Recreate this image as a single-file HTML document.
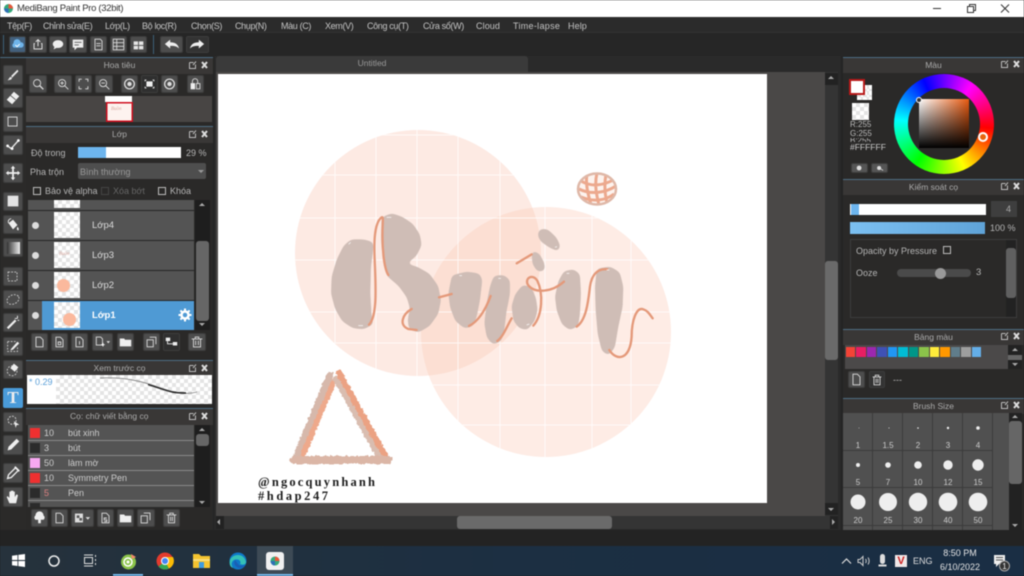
<!DOCTYPE html>
<html><head><meta charset="utf-8"><style>
*{box-sizing:border-box}
html,body{margin:0;padding:0;background:#222}
#r{position:relative;width:1024px;height:576px;overflow:hidden;background:#242424;font-family:"Liberation Sans","Noto Sans CJK SC",sans-serif;font-size:9px;color:#b5b5b5;filter:blur(.4px)}
#r div,#r span.a,#r svg.a{position:absolute}
.t{white-space:nowrap;line-height:12px}
.m{color:#c4c4c4;top:20px;letter-spacing:-.35px}
.b{background:#4d4d4d;border-radius:2px;border:1px solid #3c3c3c}
.b svg{position:absolute;left:0;top:0;width:100%;height:100%}
.h{background:#393736;border-top:1px solid #4d6d84;text-align:center;line-height:15px;font-size:8.5px;color:#aaa}
.p{background:#2a2928}
.row{background:#545454;border-bottom:1px solid #262626}
.ck{background-color:#fff;background-image:linear-gradient(45deg,#e4e4e4 25%,transparent 25%,transparent 75%,#e4e4e4 75%),linear-gradient(45deg,#e4e4e4 25%,transparent 25%,transparent 75%,#e4e4e4 75%);background-size:8px 8px;background-position:0 0,4px 4px}
.cb{width:8px;height:8px;border:1px solid #bbb}
.sw{width:10px;height:10px}
.pl{width:9.5px;height:9.5px;top:347px}
.s{background:#2b2a29}
.dot{background:#eee;border-radius:50%}
.n{width:30px;text-align:center;color:#ccc;font-size:8px;line-height:10px}
svg{display:block}
</style></head><body><div id="r">

<!-- title bar -->
<div style="left:0;top:0;width:1024px;height:17px;background:#fff"></div>
<svg class="a" style="left:3px;top:3px" width="11" height="11" viewBox="0 0 11 11"><circle cx="5.500" cy="5.500" r="4.500" fill="#38a87a"/><path d="M5.500 1a4.500 4.500 0 0 1 4.500 4.500H5.500z" fill="#e8563a"/><path d="M1 5.500a4.500 4.500 0 0 0 4.500 4.500V5.500z" fill="#2f6fb5"/></svg>
<div class="t" style="left:17px;top:3px;color:#333;font-size:9.500px;letter-spacing:-.3px">MediBang Paint Pro (32bit)</div>
<svg class="a" style="left:930px;top:2px" width="90" height="13" viewBox="0 0 90 13" fill="none" stroke="#333"><path d="M3 6.500H11"/><path d="M37.500 4.500h6v6h-6zM39.500 4.500v-2h6v6h-2"/><path d="M71 2.500l8 8M79 2.500l-8 8"/></svg>

<!-- menu -->
<div style="left:0;top:17px;width:1024px;height:16px;background:#2b2b2b;border-bottom:1px solid #333"></div>
<div class="t m" style="left:7px">Tệp(F)</div>
<div class="t m" style="left:43px">Chỉnh sửa(E)</div>
<div class="t m" style="left:105px">Lớp(L)</div>
<div class="t m" style="left:142px">Bộ lọc(R)</div>
<div class="t m" style="left:191px">Chọn(S)</div>
<div class="t m" style="left:235px">Chụp(N)</div>
<div class="t m" style="left:281px">Màu (C)</div>
<div class="t m" style="left:325px">Xem(V)</div>
<div class="t m" style="left:367px">Công cụ(T)</div>
<div class="t m" style="left:423px">Cửa sổ(W)</div>
<div class="t m" style="left:476px;letter-spacing:.1px">Cloud</div>
<div class="t m" style="left:513px;letter-spacing:.3px">Time-lapse</div>
<div class="t m" style="left:568px;letter-spacing:.1px">Help</div>

<!-- toolbar -->
<div style="left:0;top:33px;width:1024px;height:23px;background:#262626"></div>
<div style="left:3px;top:35px;width:1px;height:19px;background:#3d6078"></div>
<div style="left:153px;top:35px;width:1px;height:19px;background:#3d6078"></div>
<div class="b" style="left:9px;top:36px;width:17px;height:17px;background:#43607c"><svg viewBox="0 0 17 17"><path d="M4 12a3 3 0 0 1 0-5 4 4 0 0 1 8-1 3 3 0 0 1 1 6z" fill="#6fb4ea"/><path d="M6 9l2 2 3-3" stroke="#fff" fill="none"/></svg></div>
<div class="b" style="left:29px;top:36px;width:18px;height:17px"><svg viewBox="0 0 18 17" fill="none" stroke="#eee"><path d="M5.500 7.500h-1v6h9v-6h-1M9 10.500V3M6.500 5.500L9 3l2.500 2.500"/></svg></div>
<div class="b" style="left:49px;top:36px;width:18px;height:17px"><svg viewBox="0 0 18 17"><ellipse cx="9" cy="8" rx="6" ry="4.500" fill="#eee"/><path d="M5 11l-1 3 4-2z" fill="#eee"/></svg></div>
<div class="b" style="left:69px;top:36px;width:18px;height:17px"><svg viewBox="0 0 18 17"><path d="M3 3h12v9H8l-3 3v-3H3z" fill="#eee"/><path d="M5 6h8M5 9h5" stroke="#555"/></svg></div>
<div class="b" style="left:90px;top:36px;width:17px;height:17px"><svg viewBox="0 0 17 17" fill="none" stroke="#ddd"><path d="M4.500 2.500h6l2 2v10h-8zM6 7.500h5M6 10h5"/></svg></div>
<div class="b" style="left:110px;top:36px;width:17px;height:17px"><svg viewBox="0 0 17 17" fill="none" stroke="#ddd"><path d="M2.500 2.500h12v12h-12zM2.500 6.500h12M2.500 10.500h12M6.500 2.500v12"/></svg></div>
<div class="b" style="left:130px;top:36px;width:17px;height:17px"><svg viewBox="0 0 17 17" fill="#e5e5e5"><path d="M3 5h5v4H3zM9 5h5v4H9zM3 10h5v4H3zM9 10h5v4H9z"/></svg></div>
<div class="b" style="left:160px;top:36px;width:23px;height:17px"><svg viewBox="0 0 23 17"><path d="M4 8l6-5v3c5 0 9 2 10 7-3-3-6-3-10-3v3z" fill="#eee"/></svg></div>
<div class="b" style="left:186px;top:36px;width:23px;height:17px;background:#333"><svg viewBox="0 0 23 17"><path d="M19 8l-6-5v3C8 6 4 8 3 13c3-3 6-3 10-3v3z" fill="#eee"/></svg></div>

<!-- left tool column -->
<div class="s" style="left:0;top:57px;width:26px;height:473px;border-top:1px solid #4d6d84"></div>
<div class="b" style="left:3px;top:65px;width:20px;height:20px"><svg viewBox="0 0 20 20"><path d="M15 4L8 11l1 2 7-7zM7 12l-3 4 4-1 1-2z" fill="#e8e8e8"/></svg></div>
<div class="b" style="left:3px;top:88px;width:20px;height:20px"><svg viewBox="0 0 20 20"><path d="M11 3l6 5-8 9-6-5z" fill="#eee"/><path d="M7 7l6 5" stroke="#555"/></svg></div>
<div class="b" style="left:3px;top:112px;width:20px;height:20px"><svg viewBox="0 0 20 20" fill="none" stroke="#ddd"><path d="M4.500 4.500h10v10h-10z"/></svg></div>
<div class="b" style="left:3px;top:135px;width:20px;height:20px"><svg viewBox="0 0 20 20"><path d="M4 11l4 3 8-9" stroke="#e8e8e8" stroke-width="1.500" fill="none"/><circle cx="4" cy="11" r="1.500" fill="#fff"/><circle cx="9" cy="14" r="1.500" fill="#fff"/><circle cx="16" cy="5" r="1.500" fill="#fff"/></svg></div>
<div class="b" style="left:3px;top:163px;width:20px;height:20px"><svg viewBox="0 0 20 20" fill="#eee"><path d="M9 5h2v4h4v2h-4v4H9v-4H5V9h4z"/><path d="M10 2l2.500 3h-5zM10 18l2.500-3h-5zM2 10l3-2.500v5zM18 10l-3-2.500v5z"/></svg></div>
<div class="b" style="left:3px;top:192px;width:20px;height:19px"><svg viewBox="0 0 20 19"><path d="M4 3h12v12H4z" fill="#e4e4e4"/></svg></div>
<div class="b" style="left:3px;top:215px;width:20px;height:19px"><svg viewBox="0 0 20 19"><path d="M5 8l5-4 5 6-5 5z" fill="#eee"/><path d="M5 8C4 5 6 3 8 3" stroke="#eee" fill="none"/><path d="M15 12c1 1 2 3 1 4-2 0-2-2-1-4z" fill="#eee"/></svg></div>
<div class="b" style="left:3px;top:238px;width:20px;height:19px"><div style="left:3px;top:3px;width:13px;height:12px;background:linear-gradient(90deg,#333,#eee)"></div></div>
<div class="b" style="left:3px;top:267px;width:20px;height:19px"><svg viewBox="0 0 20 19" fill="none" stroke="#ccc" stroke-dasharray="2 1.500"><path d="M4.500 4.500h10v10h-10z"/></svg></div>
<div class="b" style="left:3px;top:290px;width:20px;height:19px"><svg viewBox="0 0 20 19" fill="none" stroke="#ccc" stroke-dasharray="2 1.500"><ellipse cx="10" cy="9.500" rx="7" ry="5" transform="rotate(-25 10 9.500)"/></svg></div>
<div class="b" style="left:3px;top:313px;width:20px;height:19px"><svg viewBox="0 0 20 19"><path d="M4 16L13 7" stroke="#eee" stroke-width="2.500"/><path d="M15 2v3M12 5h3M17 7h-2" stroke="#eee"/></svg></div>
<div class="b" style="left:3px;top:337px;width:20px;height:19px"><svg viewBox="0 0 20 19"><path d="M4 4h9M4 4v11h11V9" stroke="#ccc" stroke-dasharray="2 1.500" fill="none"/><path d="M8 12l7-8 2 2-7 7-3 1z" fill="#eee"/></svg></div>
<div class="b" style="left:3px;top:360px;width:20px;height:19px"><svg viewBox="0 0 20 19"><circle cx="9" cy="11" r="5.500" fill="none" stroke="#ccc" stroke-dasharray="2 1.500"/><path d="M11 3l5 4-4 5-5-4z" fill="#eee"/></svg></div>
<div class="b" style="left:3px;top:388px;width:20px;height:20px;background:#4a9bd9;border-color:#4a9bd9"><div class="t" style="left:0;top:1px;width:18px;text-align:center;font:bold 17px/16px 'Liberation Serif',serif;color:#eee">T</div></div>
<div class="b" style="left:3px;top:412px;width:20px;height:20px"><svg viewBox="0 0 20 20"><circle cx="9" cy="8" r="4.500" fill="none" stroke="#ddd" stroke-dasharray="2 1.500"/><path d="M11 9l6 4-3 .5-1 3z" fill="#eee"/></svg></div>
<div class="b" style="left:3px;top:435px;width:20px;height:20px"><svg viewBox="0 0 20 20"><path d="M14 3l3 3-9 9-4 1 1-4z" fill="#eee"/></svg></div>
<div class="b" style="left:3px;top:463px;width:20px;height:20px"><svg viewBox="0 0 20 20"><path d="M13 4l3 3-8 8-4 1 1-4z" fill="none" stroke="#eee" stroke-width="1.500"/><path d="M12 3l5 5" stroke="#eee" stroke-width="2"/></svg></div>
<div class="b" style="left:3px;top:487px;width:20px;height:20px"><svg viewBox="0 0 20 20"><path d="M6 17L3 10l1-1 2 2V4h1.500v5V3H9v6V3h1.500v6V4H12v6l2-3 1.500 1-2 9z" fill="#eee"/></svg></div>

<!-- Navigator panel -->
<div class="p" style="left:26px;top:57px;width:187px;height:473px"></div>
<div class="h" style="left:26px;top:57px;width:187px;height:17px">Hoa tiêu</div>
<svg class="a" style="left:188px;top:60px" width="22" height="10" viewBox="0 0 22 10"><path d="M1.500 2.500h4M1.500 2.500v6h6v-4M5 5l3-3.500" stroke="#bbb" fill="none"/><path d="M14 2l5 6M19 2l-5 6" stroke="#ddd" stroke-width="2"/></svg>
<div class="b" style="left:29px;top:75px;width:18px;height:18px"><svg viewBox="0 0 18 18" fill="none" stroke="#ddd"><circle cx="8" cy="8" r="4"/><path d="M11 11l4 4" stroke-width="1.500"/></svg></div>
<div class="b" style="left:54px;top:75px;width:18px;height:18px"><svg viewBox="0 0 18 18" fill="none" stroke="#ddd"><circle cx="8" cy="8" r="4"/><path d="M11 11l4 4M6 8h4M8 6v4"/></svg></div>
<div class="b" style="left:75px;top:75px;width:17px;height:18px"><svg viewBox="0 0 17 18" fill="none" stroke="#ddd"><path d="M3.500 6.500v-3h3M10.500 3.500h3v3M13.500 11.500v3h-3M6.500 14.500h-3v-3"/></svg></div>
<div class="b" style="left:95px;top:75px;width:18px;height:18px"><svg viewBox="0 0 18 18" fill="none" stroke="#ddd"><circle cx="8" cy="8" r="4"/><path d="M11 11l4 4M6 8h4"/></svg></div>
<div class="b" style="left:121px;top:75px;width:17px;height:18px"><svg viewBox="0 0 17 18"><circle cx="8.500" cy="9" r="5.500" fill="none" stroke="#ddd" stroke-width="1.500"/><circle cx="8.500" cy="9" r="2.500" fill="#ddd"/></svg></div>
<div class="b" style="left:141px;top:75px;width:17px;height:18px;background:#2f2f2f"><svg viewBox="0 0 17 18"><path d="M5 6h7v6H5z" fill="#eee"/><path d="M3.500 6V4.500H5M12 4.500h1.500V6M13.500 12v1.500H12M5 13.500H3.500V12" stroke="#eee" fill="none"/></svg></div>
<div class="b" style="left:161px;top:75px;width:17px;height:18px"><svg viewBox="0 0 17 18"><circle cx="8.500" cy="9" r="5.500" fill="none" stroke="#ddd" stroke-width="1.500"/><circle cx="8.500" cy="9" r="2.500" fill="#ddd"/></svg></div>
<div class="b" style="left:187px;top:75px;width:17px;height:18px"><svg viewBox="0 0 17 18"><path d="M3 8h5v7H3z" fill="#eee"/><path d="M9.500 8.500h4v6h-4zM5 8V6a3 3 0 0 1 6 0v2" stroke="#ddd" fill="none"/></svg></div>
<div style="left:26px;top:96px;width:186px;height:26px;background:#484544"></div>
<div style="left:105px;top:96px;width:27px;height:6px;background:#fff"></div>
<div style="left:106px;top:102px;width:27px;height:20px;background:#fdf3ef;border:1px solid #d01020;box-shadow:inset 0 0 0 .5px #d01020"></div>
<div class="t" style="left:111px;top:106px;font:italic 5px/8px 'Liberation Serif',serif;color:#d9a9a0">Buồn</div>

<!-- Layer panel -->
<div class="h" style="left:26px;top:126px;width:187px;height:17px">Lớp</div>
<svg class="a" style="left:188px;top:129px" width="22" height="10" viewBox="0 0 22 10"><path d="M1.500 2.500h4M1.500 2.500v6h6v-4M5 5l3-3.500" stroke="#bbb" fill="none"/><path d="M14 2l5 6M19 2l-5 6" stroke="#ddd" stroke-width="2"/></svg>
<div class="t" style="left:31px;top:147px">Độ trong</div>
<div style="left:78px;top:147px;width:103px;height:11px;background:#fff"></div>
<div style="left:78px;top:147px;width:28px;height:11px;background:#6db5ee"></div>
<div class="t" style="left:186px;top:147px">29 %</div>
<div class="t" style="left:30px;top:166px">Pha trộn</div>
<div style="left:78px;top:163px;width:128px;height:16px;background:#4e4e4e;border-radius:2px"></div>
<div class="t" style="left:80px;top:166px;color:#999">Bình thường</div>
<div class="a" style="left:198px;top:170px;width:0;height:0;border:3px solid transparent;border-top-color:#999"></div>
<div class="cb" style="left:33px;top:187px"></div><div class="t" style="left:45px;top:185px">Bảo vệ alpha</div>
<div class="cb" style="left:101px;top:187px;border-color:#444"></div><div class="t" style="left:113px;top:185px;color:#666">Xóa bớt</div>
<div class="cb" style="left:158px;top:187px"></div><div class="t" style="left:170px;top:185px">Khóa</div>

<div style="left:28px;top:200px;width:166px;height:130px;background:#545454"></div>
<div class="row" style="left:28px;top:200px;width:166px;height:11px"></div>
<div class="ck" style="left:54px;top:200px;width:26px;height:8px"></div>
<div class="row" style="left:28px;top:211px;width:166px;height:30px"></div>
<div class="row" style="left:28px;top:241px;width:166px;height:30px"></div>
<div class="row" style="left:28px;top:271px;width:166px;height:30px"></div>
<div style="left:42px;top:301px;width:152px;height:29px;background:#4f9ad4"></div>
<div class="dot" style="left:32px;top:222px;width:7px;height:7px;background:#ddd"></div>
<div class="dot" style="left:32px;top:252px;width:7px;height:7px;background:#ddd"></div>
<div class="dot" style="left:32px;top:282px;width:7px;height:7px;background:#ddd"></div>
<div class="dot" style="left:32px;top:312px;width:7px;height:7px;background:#ddd"></div>
<div class="ck" style="left:54px;top:212px;width:26px;height:26px"></div>
<div class="ck" style="left:54px;top:242px;width:26px;height:26px"></div>
<div class="t" style="left:59px;top:251px;font:italic 5px/8px 'Liberation Serif',serif;color:#d9a9a0">Buồn</div>
<div class="ck" style="left:54px;top:272px;width:26px;height:26px"></div>
<div class="a" style="left:57px;top:279px;width:13px;height:13px;border-radius:50%;background:#fbb99d"></div>
<div class="ck" style="left:54px;top:302px;width:26px;height:26px"></div>
<div class="a" style="left:63px;top:313px;width:13px;height:13px;border-radius:50%;background:#fbb99d"></div>
<div class="t" style="left:92px;top:220px;color:#ddd;font-size:9.500px">Lớp4</div>
<div class="t" style="left:92px;top:250px;color:#ddd;font-size:9.500px">Lớp3</div>
<div class="t" style="left:92px;top:280px;color:#ddd;font-size:9.500px">Lớp2</div>
<div class="t" style="left:92px;top:310px;color:#fff;font-size:9.500px;font-weight:bold">Lớp1</div>
<svg class="a" style="left:178px;top:308px" width="14" height="14" viewBox="0 0 14 14"><circle cx="7" cy="7" r="3.500" fill="none" stroke="#fff" stroke-width="2.500"/><path d="M7 .5v3M7 10.500v3M.5 7h3M10.500 7h3M2.400 2.400l2 2M9.600 9.600l2 2M11.600 2.400l-2 2M4.400 9.600l-2 2" stroke="#fff" stroke-width="2"/></svg>
<div style="left:195px;top:200px;width:15px;height:130px;background:#1e1e1e"></div>
<div style="left:196px;top:241px;width:13px;height:80px;background:#666;border-radius:3px"></div>
<div class="a" style="left:199px;top:203px;width:0;height:0;border:3.500px solid transparent;border-bottom-color:#aaa;border-top:0"></div>
<div class="a" style="left:199px;top:323px;width:0;height:0;border:3.500px solid transparent;border-top-color:#aaa;border-bottom:0"></div>

<div class="b" style="left:31px;top:333px;width:17px;height:18px"><svg viewBox="0 0 17 18" fill="none" stroke="#ddd"><path d="M4.500 3.500h5l3 3v8h-8z"/></svg></div>
<div class="b" style="left:51px;top:333px;width:17px;height:18px"><svg viewBox="0 0 17 18" fill="none" stroke="#ddd"><path d="M4.500 3.500h5l3 3v8h-8zM7 9h3v3H7z"/></svg></div>
<div class="b" style="left:71px;top:333px;width:17px;height:18px"><svg viewBox="0 0 17 18" fill="none" stroke="#ddd"><path d="M4.500 3.500h5l3 3v8h-8zM8.500 8v4"/></svg></div>
<div class="b" style="left:92px;top:333px;width:21px;height:18px"><svg viewBox="0 0 21 18" fill="none" stroke="#ddd"><path d="M3.500 3.500h5l2 2v7h-7z"/><path d="M9 12h4M11 10v4" stroke="#fff"/><path d="M15 8h4l-2 2.500z" fill="#ddd" stroke="none"/></svg></div>
<div class="b" style="left:117px;top:333px;width:17px;height:18px"><svg viewBox="0 0 17 18"><path d="M2 5h5l1 1.500h7V14H2z" fill="#eee"/></svg></div>
<div class="b" style="left:143px;top:333px;width:17px;height:18px"><svg viewBox="0 0 17 18" fill="none" stroke="#ddd"><path d="M6.500 3.500h7v8M3.500 6.500h7v8h-7z"/></svg></div>
<div class="b" style="left:163px;top:333px;width:17px;height:18px;background:#2f2f2f"><svg viewBox="0 0 17 18"><path d="M2 4h5v4H2zM10 9h5v4h-5z" fill="#eee"/><path d="M4 8v3h6" stroke="#eee" fill="none"/></svg></div>
<div class="b" style="left:188px;top:333px;width:18px;height:18px"><svg viewBox="0 0 18 18" fill="none" stroke="#ddd"><path d="M3 5.500h12M5 5.500v9h8v-9M7.500 7.500v5M10.500 7.500v5M7 5V3.500h4V5"/></svg></div>

<!-- Brush preview -->
<div class="h" style="left:26px;top:360px;width:187px;height:17px">Xem trước cọ</div>
<svg class="a" style="left:188px;top:363px" width="22" height="10" viewBox="0 0 22 10"><path d="M1.500 2.500h4M1.500 2.500v6h6v-4M5 5l3-3.500" stroke="#bbb" fill="none"/><path d="M14 2l5 6M19 2l-5 6" stroke="#ddd" stroke-width="2"/></svg>
<div style="left:27px;top:375px;width:185px;height:29px;background:#fff"></div>
<div class="ck" style="left:56px;top:375px;width:156px;height:29px"></div>
<div class="t" style="left:29px;top:376px;color:#5a9fd8;font-size:9px">* 0.29</div>
<svg class="a" style="left:56px;top:375px" width="156" height="29" viewBox="0 0 156 29"><path d="M44 3C70 2 85 6 105 13 120 18 130 20 141 17" fill="none" stroke="#888" stroke-width=".9"/><path d="M92 9.500C100 12 108 15 116 17 122 18 126 18 130 18" fill="none" stroke="#222" stroke-width="1.400"/></svg>

<!-- Brush list -->
<div class="h" style="left:26px;top:408px;width:187px;height:17px;text-align:left;padding-left:44px">Cọ: chữ viết bằng cọ</div>
<svg class="a" style="left:188px;top:411px" width="22" height="10" viewBox="0 0 22 10"><path d="M1.500 2.500h4M1.500 2.500v6h6v-4M5 5l3-3.500" stroke="#bbb" fill="none"/><path d="M14 2l5 6M19 2l-5 6" stroke="#ddd" stroke-width="2"/></svg>
<div class="row" style="left:28px;top:425px;width:166px;height:16px;border-bottom-color:#8a8a8a"></div>
<div class="row" style="left:28px;top:441px;width:166px;height:15px;border-bottom-color:#8a8a8a"></div>
<div class="row" style="left:28px;top:456px;width:166px;height:15px;border-bottom-color:#8a8a8a"></div>
<div class="row" style="left:28px;top:471px;width:166px;height:15px;border-bottom-color:#8a8a8a"></div>
<div class="row" style="left:28px;top:486px;width:166px;height:15px;border-bottom-color:#8a8a8a"></div>
<div class="row" style="left:28px;top:501px;width:166px;height:6px;border:0"></div>
<div class="sw" style="left:30px;top:428px;background:#ee3030"></div>
<div class="sw" style="left:30px;top:443px;background:#2b2b2b"></div>
<div class="sw" style="left:30px;top:458px;background:#f7a8f0"></div>
<div class="sw" style="left:30px;top:473px;background:#ee3030"></div>
<div class="sw" style="left:30px;top:488px;background:#2b2b2b"></div>
<div class="sw" style="left:30px;top:503px;height:4px;background:#2b2b2b"></div>
<div class="t" style="left:44px;top:427px;color:#ccc">10</div><div class="t" style="left:68px;top:427px;color:#ccc">bút xinh</div>
<div class="t" style="left:44px;top:442px;color:#ccc">3</div><div class="t" style="left:68px;top:442px;color:#ccc">bút</div>
<div class="t" style="left:44px;top:457px;color:#ccc">50</div><div class="t" style="left:68px;top:457px;color:#ccc">làm mờ</div>
<div class="t" style="left:44px;top:472px;color:#ccc">10</div><div class="t" style="left:68px;top:472px;color:#ccc">Symmetry Pen</div>
<div class="t" style="left:44px;top:487px;color:#d98080">5</div><div class="t" style="left:68px;top:487px;color:#ccc">Pen</div>
<div style="left:195px;top:425px;width:15px;height:82px;background:#1e1e1e"></div>
<div style="left:196px;top:434px;width:13px;height:12px;background:#666;border-radius:3px"></div>
<div class="a" style="left:199px;top:428px;width:0;height:0;border:3.500px solid transparent;border-bottom-color:#aaa;border-top:0"></div>
<div class="a" style="left:199px;top:501px;width:0;height:0;border:3.500px solid transparent;border-top-color:#aaa;border-bottom:0"></div>
<div class="b" style="left:31px;top:509px;width:17px;height:18px"><svg viewBox="0 0 17 18"><path d="M4 11a3 3 0 0 1 0-5 4.500 4.500 0 0 1 9 0 3 3 0 0 1 0 5h-3v4H7v-4z" fill="#eee"/></svg></div>
<div class="b" style="left:51px;top:509px;width:17px;height:18px"><svg viewBox="0 0 17 18" fill="none" stroke="#ddd"><path d="M4.500 3.500h5l3 3v8h-8z"/></svg></div>
<div class="b" style="left:71px;top:509px;width:23px;height:18px"><svg viewBox="0 0 23 18"><path d="M3 4h9v10H3z" fill="#ddd"/><path d="M5 6h3v3H5zM8 9h3v3H8z" fill="#555"/><path d="M15 8h5l-2.500 3z" fill="#ddd"/></svg></div>
<div class="b" style="left:97px;top:509px;width:17px;height:18px"><svg viewBox="0 0 17 18" fill="none" stroke="#ddd"><path d="M4.500 3.500h5l3 3v8h-8zM10 9H7v2h3v2H7"/></svg></div>
<div class="b" style="left:117px;top:509px;width:17px;height:18px"><svg viewBox="0 0 17 18"><path d="M2 5h5l1 1.500h7V14H2z" fill="#eee"/></svg></div>
<div class="b" style="left:137px;top:509px;width:18px;height:18px"><svg viewBox="0 0 18 18" fill="none" stroke="#ddd"><path d="M6.500 3.500h7v8M3.500 6.500h7v8h-7z"/></svg></div>
<div class="b" style="left:163px;top:509px;width:17px;height:18px"><svg viewBox="0 0 17 18" fill="none" stroke="#ddd"><path d="M3 5.500h11M5 5.500v9h7v-9M7.500 7.500v5M9.500 7.500v5M6.500 5V3.500h4V5" /></svg></div>

<!-- Canvas area -->
<div style="left:214px;top:56px;width:627px;height:474px;background:#2a2a2a"></div>
<div style="left:216px;top:56px;width:312px;height:16px;background:#3a3a3a;border-radius:3px 3px 0 0;text-align:center;line-height:15px;font-size:8.500px;color:#999">Untitled</div>
<div style="left:216px;top:72px;width:609px;height:444px;background:#4a4847"></div>
<div style="left:218px;top:74px;width:549px;height:429px;background:#fff"></div>
<svg class="a" style="left:0;top:0" width="1024" height="576" viewBox="0 0 1024 576">
<defs>
<clipPath id="cc"><circle cx="418" cy="253" r="123"/><circle cx="546" cy="332" r="125"/></clipPath>
<clipPath id="c2"><circle cx="546" cy="332" r="125"/></clipPath>
<clipPath id="bc"><ellipse cx="0" cy="0" rx="19" ry="15.500"/></clipPath>
<filter id="sm" color-interpolation-filters="sRGB"><feGaussianBlur stdDeviation="7"/><feComponentTransfer><feFuncA type="linear" slope="7" intercept="-3"/></feComponentTransfer></filter>
<filter id="ro" x="-10%" y="-10%" width="120%" height="120%" color-interpolation-filters="sRGB"><feTurbulence type="fractalNoise" baseFrequency=".35" numOctaves="2" seed="4"/><feDisplacementMap in="SourceGraphic" scale="3.500" xChannelSelector="R" yChannelSelector="G"/></filter>
</defs>
<circle cx="418" cy="253" r="123" fill="#fdeae3"/>
<circle cx="546" cy="332" r="125" fill="#feece5"/>
<circle cx="418" cy="253" r="123" fill="#fcdfd3" clip-path="url(#c2)"/>
<g clip-path="url(#cc)" stroke="#fff" stroke-opacity=".75" fill="none"><path d="M335 120v350M376 120v350M417 120v350M458 120v350M500 120v350M545 120v350M592 120v350M631 120v350M280 135H680M280 175H680M280 218H680M280 260H680M280 312H680M280 343H680M280 385H680M280 425H680"/></g>

<g transform="translate(320 160) scale(.3333)">
<g fill="#cfbdb6" stroke="#cfbdb6" stroke-width="10" stroke-linejoin="round" filter="url(#sm)">
<path d="M95 243L130 243 155 250 155 265 148 320 146 400 150 470 155 490 130 503 100 500 70 480 50 445 38 400 40 350 55 300 75 260z"/>
<path d="M190 175L215 165 245 175 275 195 295 225 300 255 285 285 260 305 245 312 290 325 325 345 350 380 358 420 350 460 325 495 295 512 272 505 268 480 275 445 265 410 240 375 205 345 195 300 188 240z"/>
<path d="M400 350L440 340 475 345 482 360 475 420 465 470 455 495 435 500 410 480 395 440 390 400z"/>
<path d="M525 352L550 350 565 362 565 400 555 450 548 510 540 540 520 548 505 530 498 490 505 430 515 380z"/>
<path d="M610 380L630 385 643 415 648 450 640 480 620 505 600 500 585 480 580 440 590 405z"/>
<path d="M640 278L655 285 668 310 670 328 655 330 642 310z"/>
<path d="M662 212L680 212 705 235 716 258 712 268 690 258 665 240 658 225z"/>
<path d="M735 338L760 333 775 345 778 400 775 460 770 495 750 505 730 490 715 450 710 410 720 365z"/>
<path d="M835 330L870 325 895 340 905 380 903 440 890 500 880 560 865 580 850 570 838 520 832 450 830 380z"/>
</g>
<g fill="none" stroke="#e4997a" stroke-width="7" stroke-linecap="round">
<path d="M147 494C170 470 168 400 165 320 162 260 160 190 185 172 195 168 180 210 192 300 195 320 198 335 205 345"/>
<path d="M357 412L395 402"/>
<path d="M275 447C248 462 235 495 265 507L290 510"/>
<path d="M447 498C480 482 500 440 512 408"/>
<path d="M532 543C550 530 560 500 575 475"/>
<path d="M640 497C668 465 670 400 652 362 635 338 612 358 625 376 645 400 695 398 732 365"/>
<path d="M590 310L635 283"/>
<path d="M770 500C800 480 805 420 810 380 815 345 832 325 862 328"/>
<path d="M868 570C890 605 930 600 935 530 935 480 950 440 970 448 985 453 990 465 998 475"/>
</g>
<g fill="none" stroke="#fff" stroke-width="3" opacity=".7"><path d="M92 247l-6 6M200 172h14M418 347h8M535 355h8M115 497h14M740 340h8M860 330h8M705 262l6-2M620 495l8-3"/></g>
</g>

<!-- ball -->
<g transform="translate(597 189)">
<ellipse cx="0" cy="0" rx="19" ry="15.500" fill="#fdf3ee"/>
<g clip-path="url(#bc)" stroke="#eca98e" stroke-width="3" fill="none"><path d="M-16-8C-6-2 6-3 18-10M-18 0C-6 6 8 4 19-3M-16 8C-4 13 8 12 17 5M-10-15C-12-4-8 8-6 16M0-16C-3-4 0 8 2 16M9-15C7-4 8 6 10 14"/></g>
<ellipse cx="0" cy="0" rx="19" ry="15.500" fill="none" stroke="#dfb8a8" stroke-width="2.500"/>
</g>

<!-- triangle -->
<g fill="none" stroke-linejoin="round" stroke-linecap="round" filter="url(#ro)">
<path d="M330 375L296 458" stroke="#d6b8ab" stroke-width="7"/>
<path d="M334 381L303 455" stroke="#eea98b" stroke-width="5.500"/>
<path d="M336 379L380 458" stroke="#d9bdb0" stroke-width="6"/>
<path d="M339 373L388 461" stroke="#eba283" stroke-width="6"/>
<path d="M294 460H388" stroke="#dbb6a6" stroke-width="8"/>
</g>
<text x="258" y="486" font-family="Liberation Serif" font-weight="bold" font-size="12.500" textLength="117" lengthAdjust="spacing" fill="#1c1c1c">@ngocquynhanh</text>
<text x="258" y="500" font-family="Liberation Serif" font-weight="bold" font-size="12.500" textLength="70" lengthAdjust="spacing" fill="#1c1c1c">#hdap247</text>
</svg>
<div style="left:216px;top:503px;width:609px;height:13px;background:#4a4847"></div>

<!-- scrollbars -->
<div style="left:825px;top:72px;width:13px;height:444px;background:#343434"></div>
<div style="left:825px;top:73px;width:13px;height:12px;background:#222"></div>
<div class="a" style="left:828px;top:76px;width:0;height:0;border:3.500px solid transparent;border-bottom-color:#aaa;border-top:0"></div>
<div style="left:825px;top:261px;width:13px;height:99px;background:#6a6a6a;border-radius:3px"></div>
<div style="left:825px;top:503px;width:13px;height:12px;background:#222"></div>
<div class="a" style="left:828px;top:508px;width:0;height:0;border:3.500px solid transparent;border-top-color:#aaa;border-bottom:0"></div>
<div style="left:216px;top:516px;width:622px;height:13px;background:#343434"></div>
<div style="left:216px;top:516px;width:8px;height:13px;background:#222"></div>
<div class="a" style="left:217px;top:519px;width:0;height:0;border:3.500px solid transparent;border-right-color:#aaa;border-left:0"></div>
<div style="left:830px;top:516px;width:8px;height:13px;background:#222"></div>
<div class="a" style="left:832px;top:519px;width:0;height:0;border:3.500px solid transparent;border-left-color:#aaa;border-right:0"></div>
<div style="left:457px;top:516px;width:155px;height:13px;background:#6a6a6a;border-radius:3px"></div>

<!-- Right: color -->
<div class="p" style="left:843px;top:57px;width:181px;height:473px"></div>
<div class="h" style="left:843px;top:57px;width:181px;height:16px">Màu</div>
<svg class="a" style="left:1000px;top:59px" width="22" height="10" viewBox="0 0 22 10"><path d="M1.500 2.500h4M1.500 2.500v6h6v-4M5 5l3-3.500" stroke="#bbb" fill="none"/><path d="M14 2l5 6M19 2l-5 6" stroke="#ddd" stroke-width="2"/></svg>
<div class="ck" style="left:857px;top:85px;width:15px;height:15px;background-size:6px 6px"></div>
<div style="left:849px;top:79px;width:16px;height:16px;background:#fff;border:2px solid #b81a1a"></div>
<div class="ck" style="left:852px;top:103px;width:17px;height:17px;background-size:8px 8px"></div>
<div class="t" style="left:850px;top:121px;font-size:8px;line-height:8.500px;color:#bbb">R:255<br>G:255</div>
<div class="t" style="left:850px;top:138px;font-size:8px;line-height:5px;height:4px;overflow:hidden;color:#bbb">B:255</div>
<div class="t" style="left:850px;top:142px;font-size:8.500px;line-height:10px;color:#ccc">#FFFFFF</div>
<div class="b" style="left:851px;top:163px;width:17px;height:10px;background:#555"><svg viewBox="0 0 17 10"><circle cx="8" cy="5" r="3" fill="#ddd"/></svg></div>
<div class="b" style="left:871px;top:163px;width:17px;height:10px;background:#555"><svg viewBox="0 0 17 10"><circle cx="8" cy="5" r="2.500" fill="#ddd"/><path d="M10 6l3 2" stroke="#ddd"/></svg></div>
<div class="a" style="left:894px;top:74px;width:100px;height:100px;border-radius:50%;background:conic-gradient(from 35deg,#f0f 0deg,#f00 60deg,#ff0 120deg,#0f0 180deg,#0ff 240deg,#00f 300deg,#f0f 360deg)"></div>
<div class="a" style="left:908px;top:88px;width:72px;height:72px;border-radius:50%;background:#2a2928"></div>
<div class="a" style="left:919px;top:99px;width:50px;height:49px;background:linear-gradient(180deg,transparent,#000),linear-gradient(90deg,#fff,#e85a10)"></div>
<div class="a" style="left:916px;top:97px;width:6px;height:6px;border-radius:50%;border:1px solid #fff;background:#333"></div>
<div class="a" style="left:978px;top:132px;width:10px;height:10px;border-radius:50%;border:2px solid #fff;background:#e8650f"></div>

<!-- brush control -->
<div class="h" style="left:843px;top:179px;width:181px;height:16px">Kiểm soát cọ</div>
<svg class="a" style="left:1000px;top:181px" width="22" height="10" viewBox="0 0 22 10"><path d="M1.500 2.500h4M1.500 2.500v6h6v-4M5 5l3-3.500" stroke="#bbb" fill="none"/><path d="M14 2l5 6M19 2l-5 6" stroke="#ddd" stroke-width="2"/></svg>
<div style="left:850px;top:204px;width:136px;height:11px;background:#fff"></div>
<div style="left:851px;top:204px;width:8px;height:11px;background:#6db5ee"></div>
<div style="left:991px;top:201px;width:26px;height:16px;background:#3e3e3e;color:#aaa;text-align:right;padding-right:6px;line-height:16px;font-size:9px">4</div>
<div style="left:850px;top:222px;width:135px;height:12px;background:linear-gradient(90deg,#7cc0f2,#5fa3d8)"></div>
<div class="t" style="left:990px;top:222px">100 %</div>
<div style="left:850px;top:239px;width:167px;height:79px;border:1px solid #3c3c3c"></div>
<div class="t" style="left:856px;top:245px;font-size:9px">Opacity by Pressure</div>
<div class="a" style="left:943px;top:246px;width:8px;height:8px;border:1px solid #bbb"></div>
<div class="t" style="left:856px;top:267px;font-size:9px">Ooze</div>
<div style="left:897px;top:269px;width:74px;height:8px;background:#4a4a4a;border-radius:4px"></div>
<div style="left:935px;top:268px;width:11px;height:11px;background:#999;border-radius:50%"></div>
<div class="t" style="left:976px;top:267px;font-size:9.500px">3</div>
<div style="left:1006px;top:240px;width:10px;height:77px;background:#222"></div>
<div style="left:1006px;top:248px;width:10px;height:50px;background:#606060;border-radius:3px"></div>

<!-- palette -->
<div class="h" style="left:843px;top:329px;width:181px;height:16px">Bảng màu</div>
<svg class="a" style="left:1000px;top:331px" width="22" height="10" viewBox="0 0 22 10"><path d="M1.500 2.500h4M1.500 2.500v6h6v-4M5 5l3-3.500" stroke="#bbb" fill="none"/><path d="M14 2l5 6M19 2l-5 6" stroke="#ddd" stroke-width="2"/></svg>
<div style="left:845px;top:345px;width:163px;height:24px;background:#4b4949"></div>
<div class="pl" style="left:845.500px;background:#f44336"></div>
<div class="pl" style="left:856px;background:#e91e63"></div>
<div class="pl" style="left:866.500px;background:#9c27b0"></div>
<div class="pl" style="left:877px;background:#3f51b5"></div>
<div class="pl" style="left:887.500px;background:#2196f3"></div>
<div class="pl" style="left:898px;background:#00bcd4"></div>
<div class="pl" style="left:908.500px;background:#009688"></div>
<div class="pl" style="left:919px;background:#8bc34a"></div>
<div class="pl" style="left:929.500px;background:#ffeb3b"></div>
<div class="pl" style="left:940px;background:#ff9800"></div>
<div class="pl" style="left:950.500px;background:#607d8b"></div>
<div class="pl" style="left:961px;background:#9e9e9e"></div>
<div class="pl" style="left:971.500px;background:#64aee8"></div>
<div style="left:1008px;top:345px;width:14px;height:24px;background:#222"></div>
<div style="left:1008px;top:355px;width:14px;height:5px;background:#666"></div>
<div class="a" style="left:1012px;top:348px;width:0;height:0;border:3.500px solid transparent;border-bottom-color:#aaa;border-top:0"></div>
<div class="a" style="left:1012px;top:363px;width:0;height:0;border:3.500px solid transparent;border-top-color:#aaa;border-bottom:0"></div>
<div class="b" style="left:848px;top:371px;width:17px;height:17px"><svg viewBox="0 0 17 17" fill="none" stroke="#ddd"><path d="M4.500 2.500h5l3 3v9h-8z"/></svg></div>
<div class="b" style="left:869px;top:371px;width:16px;height:17px;background:#333"><svg viewBox="0 0 16 17" fill="none" stroke="#ddd"><path d="M3 5.500h10M4.500 5.500v9h7v-9M7 7.500v5M9 7.500v5M6 5V3.500h4V5"/></svg></div>
<div class="t" style="left:893px;top:374px">---</div>

<!-- brush size -->
<div class="h" style="left:843px;top:398px;width:181px;height:16px">Brush Size</div>
<svg class="a" style="left:1000px;top:400px" width="22" height="10" viewBox="0 0 22 10"><path d="M1.500 2.500h4M1.500 2.500v6h6v-4M5 5l3-3.500" stroke="#bbb" fill="none"/><path d="M14 2l5 6M19 2l-5 6" stroke="#ddd" stroke-width="2"/></svg>
<div style="left:843px;top:413px;width:167px;height:118px;background:#505050"></div>
<svg class="a" style="left:843px;top:413px" width="165" height="118" viewBox="0 0 165 118"><path d="M29.500 0v118M59.500 0v118M89.500 0v118M119.500 0v118M149.500 0v118M0 37.500H150M0 74.500H150M0 112.500H150" stroke="#3c3c3c"/><g fill="#eee"><circle cx="16" cy="15" r=".4"/><circle cx="46" cy="15" r=".5"/><circle cx="75" cy="15" r=".8"/><circle cx="105" cy="15" r="1.200"/><circle cx="135" cy="15" r="1.800"/><circle cx="15" cy="52" r="2"/><circle cx="45" cy="52" r="2.800"/><circle cx="75" cy="52" r="3.800"/><circle cx="105" cy="52" r="4.700"/><circle cx="135" cy="52" r="5.700"/><circle cx="15" cy="89" r="7.500"/><circle cx="45" cy="89" r="9"/><circle cx="75" cy="89" r="9.200"/><circle cx="105" cy="89" r="9.300"/><circle cx="135" cy="89" r="9.300"/></g></svg>
<div class="n" style="left:843px;top:441px">1</div><div class="n" style="left:873px;top:441px">1.5</div><div class="n" style="left:903px;top:441px">2</div><div class="n" style="left:933px;top:441px">3</div><div class="n" style="left:963px;top:441px">4</div>
<div class="n" style="left:843px;top:478px">5</div><div class="n" style="left:873px;top:478px">7</div><div class="n" style="left:903px;top:478px">10</div><div class="n" style="left:933px;top:478px">12</div><div class="n" style="left:963px;top:478px">15</div>
<div class="n" style="left:843px;top:516px">20</div><div class="n" style="left:873px;top:516px">25</div><div class="n" style="left:903px;top:516px">30</div><div class="n" style="left:933px;top:516px">40</div><div class="n" style="left:963px;top:516px">50</div>
<div style="left:1009px;top:413px;width:13px;height:118px;background:#222"></div>
<div style="left:1009px;top:421px;width:13px;height:63px;background:#666;border-radius:3px"></div>
<div class="a" style="left:1012px;top:415px;width:0;height:0;border:3.500px solid transparent;border-bottom-color:#aaa;border-top:0"></div>
<div class="a" style="left:1012px;top:524px;width:0;height:0;border:3.500px solid transparent;border-top-color:#aaa;border-bottom:0"></div>

<div style="left:0;top:530px;width:1024px;height:16px;background:#232323"></div>

<!-- taskbar -->
<div style="left:0;top:546px;width:1024px;height:30px;background:linear-gradient(90deg,#26323c,#1c2f42 50%,#1a2e44)"></div>
<svg class="a" style="left:12px;top:554px" width="13" height="13" viewBox="0 0 13 13" fill="#fff"><path d="M0 1.800L5.500 1v5H0zM6.300.9L13 0v6H6.300zM0 7h5.500v5L0 11.200zM6.300 7H13v6l-6.700-.9z"/></svg>
<svg class="a" style="left:47px;top:554px" width="14" height="14" viewBox="0 0 14 14"><circle cx="7" cy="7" r="5" fill="none" stroke="#eee" stroke-width="1.500"/></svg>
<svg class="a" style="left:83px;top:554px" width="14" height="13" viewBox="0 0 14 13" fill="none" stroke="#ddd"><path d="M1.500 3.500h8v6h-8zM1 1h9M1 12h9M12.500 1v2M12.500 5v2M12.500 9v2"/></svg>
<div style="left:113px;top:574px;width:30px;height:2px;background:#76b9ed"></div>
<svg class="a" style="left:120px;top:552px" width="18" height="18" viewBox="0 0 18 18"><circle cx="8.500" cy="10" r="7.500" fill="#8bc34a"/><circle cx="8" cy="10" r="4" fill="none" stroke="#fff" stroke-width="1.500"/><circle cx="8" cy="10" r="1.500" fill="#fff"/><path d="M11 2l5 3-4 2z" fill="#f48a6a"/></svg>
<svg class="a" style="left:156px;top:552px" width="18" height="18" viewBox="0 0 18 18"><circle cx="9" cy="9" r="8.500" fill="#e33b2e"/><path d="M9 9L2.500 14.500A8.500 8.500 0 0 0 13 16.500z" fill="#34a853"/><path d="M9 5h8a8.500 8.500 0 0 1-4 11.500L9 9z" fill="#fbbc05"/><circle cx="9" cy="9" r="4" fill="#fff"/><circle cx="9" cy="9" r="3" fill="#4285f4"/></svg>
<svg class="a" style="left:193px;top:552px" width="17" height="17" viewBox="0 0 17 17"><path d="M0 2h6l2 2h9v12H0z" fill="#f4c430"/><path d="M0 7h17v2H0z" fill="#f9de7a"/><path d="M6 10h5v6H6z" fill="#3d9be0"/></svg>
<svg class="a" style="left:229px;top:552px" width="18" height="18" viewBox="0 0 18 18"><circle cx="9" cy="9" r="8.500" fill="#0f78c8"/><path d="M1 8c2-6 14-8 16 2 0 3-4 3-6 2 2-3-2-6-6-4-3 2-3 5-1 8-3-1-4-4-3-8z" fill="#35c1b6"/><path d="M6 8c-2 3 0 7 4 8 3 0 5-1 6-3-3 1-6 1-7-1-1-1-2-3-3-4z" fill="#1a5fb4"/></svg>
<div style="left:257px;top:546px;width:36px;height:30px;background:#3d4a55"></div>
<div style="left:257px;top:574px;width:36px;height:2px;background:#76b9ed"></div>
<div style="left:266px;top:552px;width:18px;height:18px;border-radius:3px;background:#f1f1f1"></div>
<svg class="a" style="left:270px;top:556px" width="10" height="10" viewBox="0 0 11 11"><circle cx="5.500" cy="5.500" r="5" fill="#38a87a"/><path d="M5.500.5a5 5 0 0 1 5 5H5.500z" fill="#e8563a"/><path d="M.5 5.500a5 5 0 0 0 5 5V5.500z" fill="#2f6fb5"/></svg>

<svg class="a" style="left:841px;top:557px" width="11" height="8" viewBox="0 0 11 8"><path d="M1 6.500L5.500 2 10 6.500" stroke="#ddd" fill="none" stroke-width="1.200"/></svg>
<svg class="a" style="left:857px;top:555px" width="14" height="12" viewBox="0 0 14 12" fill="none" stroke="#ccc"><path d="M1 4.500h2l3-3v9l-3-3H1zM8.500 4c1 1 1 3 0 4M11 2.500c1.500 2 1.500 5 0 7" /></svg>
<svg class="a" style="left:877px;top:553px" width="10" height="16" viewBox="0 0 10 16"><rect x="3" y="1" width="5" height="10" rx="2.500" fill="#ddd"/><path d="M1.500 12.500h8" stroke="#ddd" stroke-width="2"/></svg>
<div style="left:895px;top:555px;width:12px;height:12px;background:#f0e8e8;color:#c22;text-align:center;font:bold 11px/12px 'Liberation Sans',sans-serif">V</div>
<div class="t" style="left:913px;top:555px;color:#ddd;font-size:9px">ENG</div>
<div class="t" style="left:935px;top:546px;width:50px;text-align:center;color:#e4e4e4;font-size:9px;line-height:14px">8:50 PM<br>6/10/2022</div>
<svg class="a" style="left:993px;top:553px" width="22" height="20" viewBox="0 0 22 20"><path d="M1 2h11v9H6l-3 3v-3H1z" fill="#eee"/><path d="M3 4.500h7M3 7h7" stroke="#555"/><circle cx="11.500" cy="13" r="5" fill="#333" stroke="#aaa"/><text x="11.500" y="16" font-size="8" font-family="Liberation Sans" text-anchor="middle" fill="#eee">1</text></svg>
</div></body></html>
